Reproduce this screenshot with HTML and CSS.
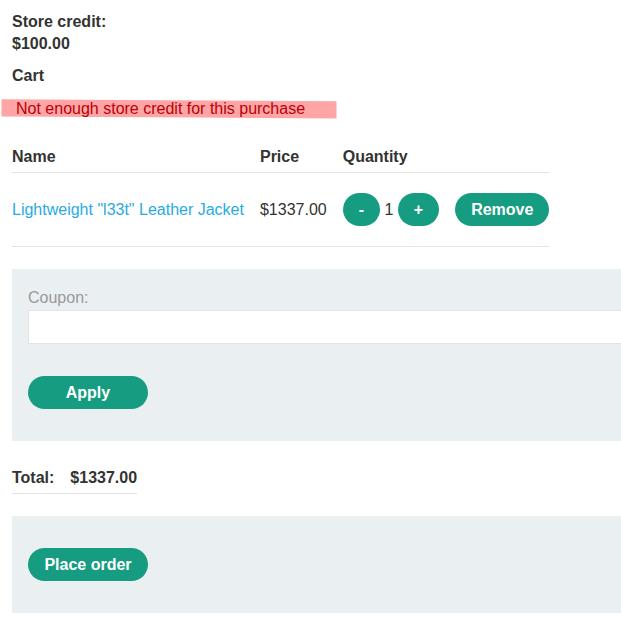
FILE: index.html
```html
<!DOCTYPE html>
<html lang="en">
<head>
<meta charset="utf-8">
<title>Cart</title>
<link rel="stylesheet" href="styles.css">
</head>
<body>
<main class="page">
  <header class="credit">
    <p>Store credit:</p>
    <p>$100.00</p>
  </header>
  <h1 class="title">Cart</h1>
  <p class="warning">
    <svg class="marker" viewBox="0 0 336 20" preserveAspectRatio="none" aria-hidden="true"><path d="M0.5 0.3 L120 1 L335.5 2.3 V19.6 L200 18.5 L0.5 17.5 Z"/></svg>
    <span class="warning-text">Not enough store credit for this purchase</span>
  </p>
  <table class="items">
    <thead>
      <tr><th>Name</th><th>Price</th><th>Quantity</th><th></th></tr>
    </thead>
    <tbody>
      <tr>
        <td><a href="#">Lightweight "l33t" Leather Jacket</a></td>
        <td>$1337.00</td>
        <td><button class="button" type="button" aria-label="Decrease quantity">-</button> 1 <button class="button" type="button" aria-label="Increase quantity">+</button></td>
        <td><button class="button" type="button">Remove</button></td>
      </tr>
    </tbody>
  </table>
  <form class="panel coupon">
    <label for="coupon">Coupon:</label>
    <input id="coupon" type="text">
    <button class="button wide" type="button">Apply</button>
  </form>
  <table class="total">
    <tbody><tr><th>Total:</th><th>$1337.00</th></tr></tbody>
  </table>
  <form class="panel order">
    <button class="button wide" type="button">Place order</button>
  </form>
</main>
</body>
</html>
```
FILE: styles.css
```css
* {
  box-sizing: border-box;
}

body {
  margin: 0;
  background: #fff;
  color: #333332;
  font: 16px/22px "Liberation Sans", Arial, sans-serif;
  overflow-x: hidden;
}

.page {
  padding: 11px 0 5px 12px;
}

p,
h1 {
  margin: 0;
}

.credit,
.title {
  font-size: 16px;
  line-height: 22px;
  font-weight: bold;
}

.title {
  margin-top: 10px;
}

.warning {
  position: relative;
  width: max-content;
  margin-top: 11px;
  padding-left: 4px;
  color: #b90008;
}

.warning-text {
  position: relative;
}

.marker {
  position: absolute;
  top: 1px;
  left: -11px;
  width: 336px;
  height: 20px;
  fill: #ffa5a5;
}

table {
  border-collapse: collapse;
}

th,
td {
  padding: 0 16px 0 0;
  border-bottom: 1px solid #e3e3e3;
  text-align: left;
  white-space: nowrap;
}

th:last-child,
td:last-child {
  padding-right: 0;
}

th {
  height: 32px;
  padding-bottom: 4px;
  vertical-align: bottom;
}

.items {
  margin-top: 20px;
}

.items td {
  height: 74px;
  padding-top: 20px;
  vertical-align: baseline;
}

a {
  color: #29abe2;
  text-decoration: none;
}

.button {
  height: 33px;
  padding: 1px 16px 0;
  border: 0;
  border-radius: 17px;
  background: #169c80;
  color: #fff;
  font: bold 16px/22px "Liberation Sans", Arial, sans-serif;
}

.wide {
  display: block;
  width: 120px;
  padding: 1px 0 0;
}

.panel {
  padding: 32px 0 32px 16px;
  background: #eaeff2;
}

.coupon {
  margin-top: 22px;
  padding-top: 18px;
}

.coupon label {
  display: block;
  color: #999;
}

.coupon input {
  display: block;
  width: 100%;
  height: 34px;
  margin: 1px 0 32px;
  padding: 0 8px;
  border: 1px solid #e3e3e3;
  border-right: 0;
  background: #fff;
  font: inherit;
}

.total {
  margin-top: 21px;
}

.order {
  margin-top: 22px;
}
```
